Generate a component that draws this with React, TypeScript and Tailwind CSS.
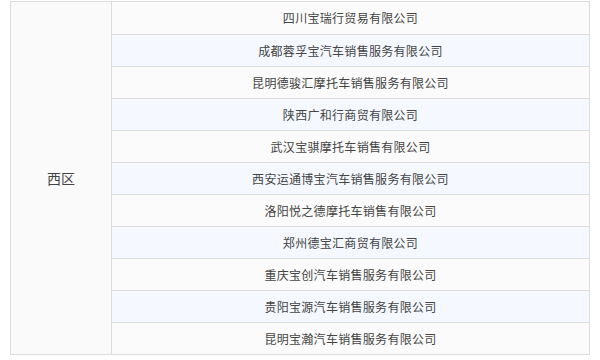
const companies = [
  '四川宝瑞行贸易有限公司',
  '成都蓉孚宝汽车销售服务有限公司',
  '昆明德骏汇摩托车销售服务有限公司',
  '陕西广和行商贸有限公司',
  '武汉宝骐摩托车销售有限公司',
  '西安运通博宝汽车销售服务有限公司',
  '洛阳悦之德摩托车销售有限公司',
  '郑州德宝汇商贸有限公司',
  '重庆宝创汽车销售服务有限公司',
  '贵阳宝源汽车销售服务有限公司',
  '昆明宝瀚汽车销售服务有限公司',
];

export default function App() {
  return (
    <div
      className="w-[600px] h-[360px] bg-white pt-[1px] pl-[10px] text-[#444]"
      style={{ fontFamily: '"Noto Sans CJK SC", "Liberation Sans", sans-serif' }}
    >
      <div className="w-[580px] flex border border-[#dcdcdc]">
        {/* 区域 */}
        <div className="w-[101px] shrink-0 border-r border-[#dcdcdc] bg-[#fafafa] flex items-center justify-center text-[14px]">
          西区
        </div>
        {/* 经销商列表 */}
        <div className="flex-1 flex flex-col">
          {companies.map((name, i) => (
            <div
              key={name}
              className={
                'h-[32px] flex items-center justify-center text-[12px] tracking-[0.3px] ' +
                (i === 0 ? 'h-[31px] ' : 'border-t border-[#dcdcdc] ') +
                (i % 2 === 1 ? 'bg-[#f5f9ff]' : 'bg-[#fbfbfb]')
              }
            >
              {name}
            </div>
          ))}
        </div>
      </div>
    </div>
  );
}
